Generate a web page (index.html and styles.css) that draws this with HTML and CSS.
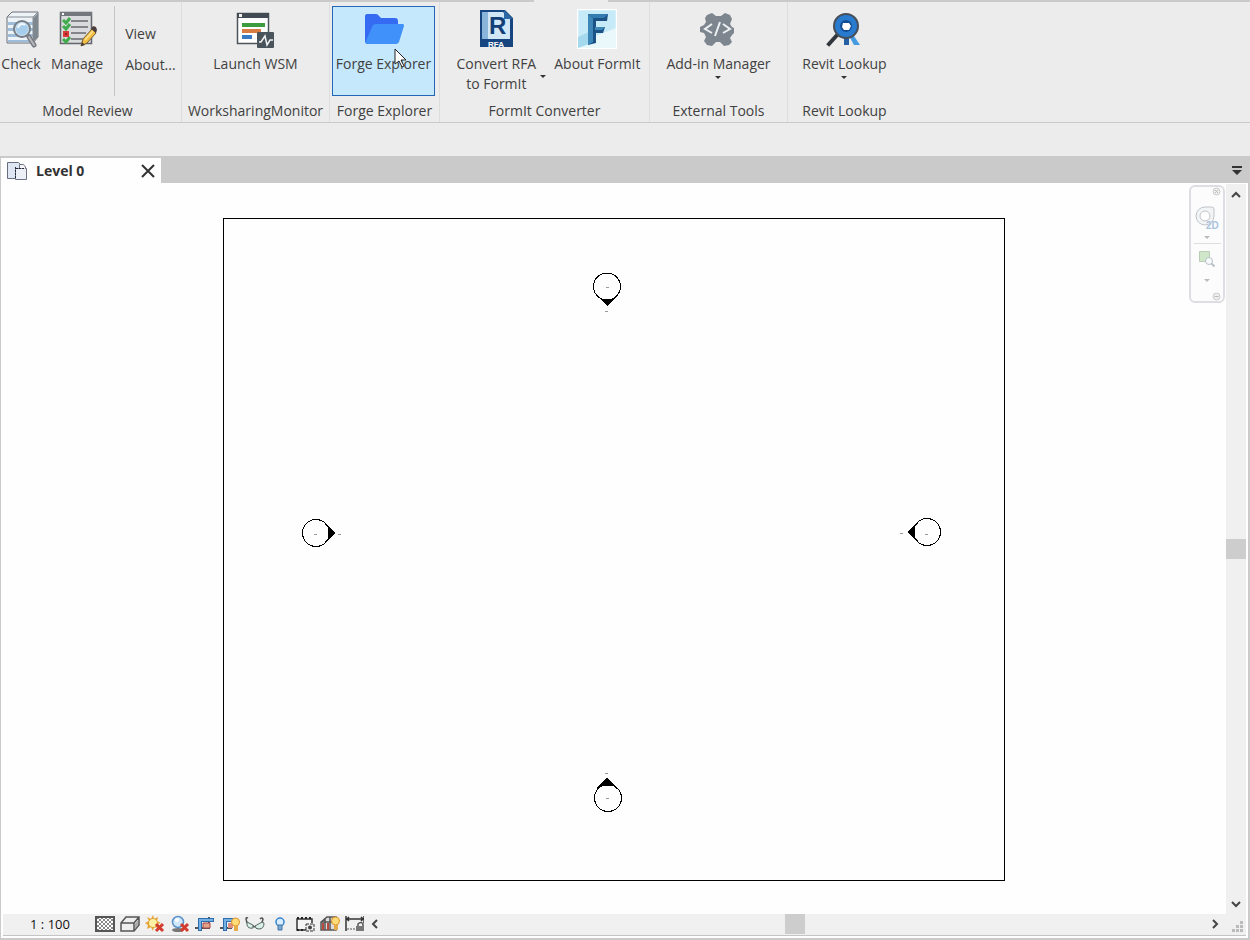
FILE: index.html
```
<!DOCTYPE html>
<html lang="en">
<head>
<meta charset="utf-8">
<title>Level 0</title>
<link rel="stylesheet" href="styles.css">
</head>
<body>
<div class="app">
  <header class="ribbon">
    <div class="ribbon-edge"><span class="ribbon-notch"></span></div>
    <div class="panels">
      <section class="panel panel-review">
        <div class="tools">
          <button class="tool tool-check" type="button">
            <svg class="icon" viewBox="0 0 40 40" aria-hidden="true">
              <path d="M6 8l5-5h26v25l-5 6H6z" fill="#eef3f7" stroke="#6a7179"/>
              <path d="M32 9l5-5v24l-5 5z" fill="#7f878f"/>
              <path d="M7 13h25v3H7zM7 19h25v3H7zM7 25h25v3H7zM7 31h25v2H7z" fill="#9dbddb"/>
              <path d="M6 8h26l5-5M32 8v25" fill="none" stroke="#858c94"/>
              <path d="M28 28l5 8" stroke="#777b81" stroke-width="5" stroke-linecap="round"/>
              <path d="M28 28l5 8" stroke="#b5b8bc" stroke-width="2" stroke-linecap="round"/>
              <circle cx="21" cy="20" r="8" fill="#cce2f4" stroke="#777d84" stroke-width="2"/>
              <circle cx="21" cy="20" r="6" fill="#a6cdec"/>
              <path d="M17 19c1-4 4-5 7-3" fill="none" stroke="#f4faff" stroke-width="2"/>
            </svg>
            <span class="label">Check</span>
          </button>
          <button class="tool tool-manage" type="button">
            <svg class="icon" viewBox="0 0 40 40" aria-hidden="true">
              <path d="M3.500 3.500h31v31h-31z" fill="#d9dbdd" stroke="#62666b" stroke-width="1.500"/>
              <path d="M3 3h32v4H3z" fill="#74787e"/><path d="M5 4h2v2H5z" fill="#fff"/>
              <path d="M14 12h17M14 18h17M14 24h15M14 30h12" stroke="#65696e" stroke-width="1.500"/>
              <path d="M6 11l3 3 4-5M6 17l3 3 4-5M6 30l3 3 4-5" fill="none" stroke="#3fab4b" stroke-width="3"/>
              <path d="M6 22h6v6H6z" fill="#dd3838"/><path d="M8 24l2 2M10 24l-2 2" stroke="#942020"/>
              <path d="M24 37l2-7 9-10 4 4-9 10z" fill="#f4bf43" stroke="#775f35"/>
              <path d="M34 20l2-3 3 1 1 3-1 3z" fill="#4d3e3c"/><path d="M24 37l1-4 3 3z" fill="#443c35"/>
              <path d="M28 31l8-9" stroke="#ffe393" stroke-width="1.500"/>
            </svg>
            <span class="label">Manage</span>
          </button>
          <div class="stack">
            <button class="small" type="button">View</button>
            <button class="small" type="button">About...</button>
          </div>
        </div>
        <h2 class="panel-title">Model Review</h2>
      </section>
      <section class="panel panel-wsm">
        <div class="tools">
          <button class="tool" type="button">
            <svg class="icon" viewBox="0 0 40 40" aria-hidden="true">
              <path d="M2.500 4.500h31v30h-31z" fill="#fff" stroke="#4b535b" stroke-width="1.500"/>
              <path d="M2 4h32v5H2z" fill="#424b54"/><path d="M4 5h3v3H4z" fill="#f4f4f4"/>
              <path d="M7 14h23v4H7z" fill="#3d9b40"/><path d="M7 20h19v4H7z" fill="#d77d43"/><path d="M7 26h10v4H7z" fill="#397ac4"/>
              <rect x="22" y="23" width="17" height="16" rx="1" fill="#4a545d"/>
              <path d="M24 33h2l4-6 2 9 3-5h3" fill="none" stroke="#f2f2f2" stroke-width="1.500"/>
            </svg>
            <span class="label">Launch WSM</span>
          </button>
        </div>
        <h2 class="panel-title">WorksharingMonitor</h2>
      </section>
      <section class="panel panel-forge">
        <div class="tools">
          <button class="tool tool-active" type="button">
            <svg class="icon" viewBox="0 0 40 40" aria-hidden="true">
              <path d="M1 34V7q0-2 2-2h9q2 0 3 2l2 2h14q3 0 3 3v4l-6 19H4q-3 0-3-3z" fill="#356bf3"/>
              <path d="M12 15h27q1 0 1 2l-5 16q-1 2-3 2H4q-3 0-2-3l6-14q1-3 4-3z" fill="#4191fa"/>
            </svg>
            <span class="label">Forge Explorer</span>
            <svg class="cursor" viewBox="0 0 13 20" aria-hidden="true"><path d="M1 1v15l4-3 3 6 2-1-3-6h5z" fill="#fff" stroke="#222"/></svg>
          </button>
        </div>
        <h2 class="panel-title">Forge Explorer</h2>
      </section>
      <section class="panel panel-formit">
        <div class="tools">
          <button class="tool tool-convert" type="button">
            <svg class="icon" viewBox="0 0 40 40" aria-hidden="true">
              <path d="M4 1h25l8 8v29H4z" fill="#17457f"/><path d="M6 3h21l7 7v20H6z" fill="#d2e7f5"/>
              <path d="M6 3h6v27H6z" fill="#88b5d9"/><path d="M28 1l9 9h-9z" fill="#2c68a4"/>
              <text class="glyph" x="13" y="25" font-size="24" fill="#123f78">R</text>
              <text class="glyph" x="20" y="38" font-size="8" text-anchor="middle" fill="#fff">RFA</text>
            </svg>
            <span class="label">Convert RFA<br>to FormIt</span>
            <span class="arrow arrow-side"></span>
          </button>
          <button class="tool" type="button">
            <svg class="icon" viewBox="0 0 40 40" aria-hidden="true">
              <path d="M.5.500h39v39H.500z" fill="#c7eaf8" stroke="#fff" stroke-width="1.500"/>
              <path d="M1 34l38-15v20H1z" fill="#eaf8fc"/><path d="M1 28l11-5v12L1 39z" fill="#a4d8ed"/>
              <path d="M11 5h20l-1 7H19v6h9l-2 6h-7v10l-8 2z" fill="#1d5286"/>
              <path d="M11 5l5 4v24l-5 3z" fill="#3c86b8"/><path d="M11 5h20l-4 4H16z" fill="#337bb0"/>
              <path d="M18 18h10l-3 3h-7z" fill="#3e89b9"/>
            </svg>
            <span class="label">About FormIt</span>
          </button>
        </div>
        <h2 class="panel-title">FormIt Converter</h2>
      </section>
      <section class="panel panel-external">
        <div class="tools">
          <button class="tool" type="button">
            <svg class="icon" viewBox="0 0 40 40" aria-hidden="true">
              <path d="M9 6l5-2 4 3h5l4-3 5 2 2 4-2 5 2 3 2 1v5l-2 2-2 3 2 4-3 3-5 1-4-4h-4l-4 4-5-1-3-4 2-4-2-4-4-1v-5l4-2 2-3-1-4z" fill="#7d858e"/>
              <path d="M14 15l-7 5 7 4M25 15l7 5-7 4M22 13l-5 14" fill="none" stroke="#edf1f4" stroke-width="2"/>
            </svg>
            <span class="label">Add-in Manager</span><span class="arrow"></span>
          </button>
        </div>
        <h2 class="panel-title">External Tools</h2>
      </section>
      <section class="panel panel-lookup">
        <div class="tools">
          <button class="tool" type="button">
            <svg class="icon" viewBox="0 0 40 40" aria-hidden="true">
              <path d="M20 27h5v9h-5z" fill="#2460a3"/><path d="M25 27h5l6 9h-6z" fill="#459ae0"/>
              <path d="M14 25L5 35" stroke="#31373d" stroke-width="4" stroke-linecap="square"/>
              <circle cx="22" cy="17" r="12" fill="#297bcf" stroke="#464e57" stroke-width="2"/>
              <circle cx="22" cy="17" r="6" fill="#124f96"/><path d="M19 14h6l2 3-2 4h-5l-2-3z" fill="#fff"/>
            </svg>
            <span class="label">Revit Lookup</span><span class="arrow"></span>
          </button>
        </div>
        <h2 class="panel-title">Revit Lookup</h2>
      </section>
    </div>
  </header>

  <main class="view">
    <div class="tabs">
      <div class="tab">
        <svg class="tab-icon" viewBox="0 0 20 18" aria-hidden="true">
          <path d="M.5.500h11l2 2v14H.500z" fill="#dfe6f3" stroke="#666d7c"/>
          <path d="M8.500 6.500h11v11h-11z" fill="#eef0f8" stroke="#6e7484"/>
          <path d="M12.500 6V2.500h4L18.500 5v2" fill="#f6f7fb" stroke="#6e7484"/>
          <path d="M8.500 5v12M9 6.500h9" stroke="#252a34" stroke-dasharray="2 1"/>
        </svg>
        <span class="tab-name">Level 0</span>
        <button class="plain close" type="button" aria-label="Close view"><svg viewBox="0 0 14 14" width="14" height="14"><path d="M1 1l12 12M13 1L1 13" stroke="#333" stroke-width="2"/></svg></button>
      </div>
      <button class="plain tab-menu" type="button" aria-label="List views"><svg viewBox="0 0 10 9" width="10" height="9"><path d="M0 0h10v2H0zM0 4h10L5 9z" fill="#333"/></svg></button>
    </div>

    <div class="workspace">
      <div class="canvas">
        <svg class="drawing" viewBox="0 0 782 663" shape-rendering="crispEdges" role="img" aria-label="Floor plan with four elevation markers">
          <path d="M.5.500h781v662H.500z" fill="none" stroke="#000"/>
          <g fill="#fefefe" stroke="#000">
            <circle cx="384" cy="68.500" r="13.500"/>
            <circle cx="93" cy="315" r="13.500"/>
            <circle cx="704" cy="314" r="13.500"/>
            <circle cx="385" cy="580" r="13.500"/>
          </g>
          <path d="M374 78l3 3h13l3-3 1 1-10 9z"/>
          <path d="M102 305l10 10-10 10-1-1 4-4v-11l-4-3z"/>
          <path d="M695 304l-11 10 10 10 1-1-3-4v-11l3-3z"/>
          <path d="M384 560l11 10-1 1-4-3h-13l-3 3-1-1z"/>
          <path d="M383 69.500h3M382 93.500h3M91 316.500h3M115 316.500h3M702 316.500h3M677 315.500h3M382 555.500h3M383 580.500h3" stroke="#999"/>
        </svg>
        <nav class="navbar" aria-label="Navigation bar">
          <button class="plain nav-corner" type="button" aria-label="Close navigation bar"><svg viewBox="0 0 9 9" width="9" height="9"><circle cx="4.500" cy="4.500" r="3.500" fill="#eee" stroke="#ccc"/><path d="M3 3l3 3M6 3L3 6" stroke="#bbb"/></svg></button>
          <button class="plain nav-wheel" type="button" aria-label="Steering wheel 2D"><svg viewBox="0 0 26 26" width="26" height="26"><path d="M11 2h7q2 0 2 2v7a9 9 0 1 1-9-9z" fill="#f3f4f5" stroke="#bfc3c8"/><circle cx="11" cy="11" r="5" fill="#fff" stroke="#bfc3c8"/><text class="nav-text" x="12" y="24">2D</text></svg></button>
          <span class="arrow arrow-faint"></span>
          <button class="plain nav-zoom" type="button" aria-label="Zoom region"><svg viewBox="0 0 18 18" width="18" height="18"><path d="M1.500 1.500h10v10h-10z" fill="#d0e6c9" stroke="#b9cdb6"/><circle cx="11" cy="11" r="3.500" fill="#f7fafb" stroke="#b9c0c8"/><path d="M13.500 13.500l3 3" stroke="#b9c0c8" stroke-width="2"/></svg></button>
          <span class="arrow arrow-faint"></span>
          <button class="plain nav-corner nav-last" type="button" aria-label="Navigation options"><svg viewBox="0 0 9 9" width="9" height="9"><circle cx="4.500" cy="4.500" r="3.500" fill="#eee" stroke="#ccc"/><path d="M2.500 4.500h4" stroke="#bbb"/></svg></button>
        </nav>
      </div>
      <div class="scroll scroll-y">
        <button class="plain step" type="button" aria-label="Scroll up"><svg viewBox="0 0 10 7" width="10" height="7"><path d="M1 6l4-4 4 4" fill="none" stroke="#444" stroke-width="2"/></svg></button>
        <div class="track"><span class="thumb"></span></div>
        <button class="plain step" type="button" aria-label="Scroll down"><svg viewBox="0 0 10 7" width="10" height="7"><path d="M1 1l4 4 4-4" fill="none" stroke="#444" stroke-width="2"/></svg></button>
      </div>
    </div>

    <footer class="status">
      <button class="plain scale" type="button">1 : 100</button>
      <div class="view-tools">
        <button class="plain" type="button" aria-label="Detail level"><svg viewBox="0 0 20 18" width="20" height="18"><defs><pattern id="check" width="4" height="4" patternUnits="userSpaceOnUse"><path d="M0 0h2v2H0zM2 2h2v2H2z" fill="#888"/></pattern></defs><path d="M1 2h18v14H1z" fill="#fff"/><path d="M1 2h18v14H1z" fill="url(#check)" stroke="#555" stroke-width="2"/></svg></button>
        <button class="plain" type="button" aria-label="Visual style"><svg viewBox="0 0 20 18" width="20" height="18"><path d="M1 8l5-6h13v8l-5 6H1zM1 8h13v8M14 8l5-6" fill="#eee" stroke="#555" stroke-width="1.500"/><path d="M15 9l3-4v5l-3 4z" fill="#aaa"/></svg></button>
        <button class="plain" type="button" aria-label="Sun path off"><svg viewBox="0 0 20 18" width="20" height="18"><path d="M8 0l1 4 4-2-1 4 4 2-4 1 1 4-4-1-1 4-2-4-4 2 1-4-3-2 4-2-2-4 4 2z" fill="#e9a12e"/><circle cx="8" cy="8" r="4.500" fill="#fff1a3" stroke="#dda438"/><path d="M11 9l7 7M18 9l-7 7" stroke="#d33b2e" stroke-width="3"/></svg></button>
        <button class="plain" type="button" aria-label="Shadows off"><svg viewBox="0 0 20 18" width="20" height="18"><ellipse cx="8" cy="15" rx="6" ry="2" fill="#777"/><circle cx="8" cy="7" r="5.500" fill="#d1e8fa" stroke="#5a91c9" stroke-width="1.500"/><circle cx="7" cy="5" r="2" fill="#fff"/><path d="M11 9l7 7M18 9l-7 7" stroke="#d33b2e" stroke-width="3"/></svg></button>
        <button class="plain" type="button" aria-label="Crop view"><svg viewBox="0 0 20 18" width="20" height="18"><path d="M14 2v11H0" fill="none" stroke="#555" stroke-width="2"/><path d="M8 8h7v5H8z" fill="#e3a28c" stroke="#a44"/><path d="M5 16V5h14" fill="none" stroke="#2b6daf" stroke-width="4"/><path d="M5 15V5h13" fill="none" stroke="#76b1e4" stroke-width="2"/></svg></button>
        <button class="plain" type="button" aria-label="Show crop region"><svg viewBox="0 0 20 18" width="20" height="18"><path d="M0 13h12" stroke="#555" stroke-width="2"/><path d="M8 8h5v5H8z" fill="#dd8d7d"/><path d="M5 16V5h10" fill="none" stroke="#2b6daf" stroke-width="4"/><path d="M5 15V5h9" fill="none" stroke="#76b1e4" stroke-width="2"/><circle cx="15.500" cy="7" r="4" fill="#ffdc79" stroke="#df9329"/><path d="M14 11h4v5h-4z" fill="#e5ab48"/></svg></button>
        <button class="plain" type="button" aria-label="Temporary hide or isolate"><svg viewBox="0 0 20 18" width="20" height="18"><path d="M2 8L1 4q0-2 2-1M10 12l-2-1M17 8l1-4q-1-2-3 0" fill="none" stroke="#555" stroke-width="1.500"/><path d="M2 7l6 3v3q-5 1-6-3zM10 11l7-4 2 1q0 6-5 6-4 0-4-3z" fill="#d8eee6" stroke="#53665f"/></svg></button>
        <button class="plain" type="button" aria-label="Reveal hidden elements"><svg viewBox="0 0 20 18" width="20" height="18"><circle cx="10" cy="7" r="4" fill="#d9efff" stroke="#3184ce" stroke-width="1.500"/><path d="M8 10h4v5H8z" fill="#79a9d3" stroke="#4377a6"/></svg></button>
        <button class="plain" type="button" aria-label="Temporary view properties"><svg viewBox="0 0 20 18" width="20" height="18"><path d="M11 15H2V4h15v4" fill="#f5f5f5" stroke="#333" stroke-width="1.500"/><path d="M2 3h15M2 15h8" stroke="#222" stroke-width="2" stroke-dasharray="2 2"/><path d="M11 9h8v7h-8z" fill="#eee" stroke="#333" stroke-dasharray="3 1"/><circle cx="15" cy="12.500" r="2" fill="#444"/></svg></button>
        <button class="plain" type="button" aria-label="Analytical model"><svg viewBox="0 0 20 18" width="20" height="18"><path d="M1 7l6-5h9v13H1zM1 7h12M5 3v12M10 2v13" fill="#ddd" stroke="#555" stroke-width="1.500"/><path d="M2 8h2v7H2zM7 8h2v7H7z" fill="#b9483f"/><circle cx="15.500" cy="6" r="4" fill="#ffdc79" stroke="#df9329"/><path d="M14 10h4v5h-4z" fill="#e5ab48"/></svg></button>
        <button class="plain" type="button" aria-label="Reveal constraints"><svg viewBox="0 0 20 18" width="20" height="18"><path d="M1 1v15M19 1v7M2 4h16M4 2L2 4l2 2M16 2l2 2-2 2" fill="none" stroke="#333" stroke-width="1.500"/><path d="M2 14h9" stroke="#555" stroke-dasharray="2 1"/><path d="M13 11V9q3-3 5 0v2" fill="none" stroke="#555" stroke-width="1.500"/><path d="M11 11h8v5h-8z" fill="#777"/></svg></button>
      </div>
      <div class="scroll scroll-x">
        <button class="plain step" type="button" aria-label="Scroll left"><svg viewBox="0 0 7 10" width="7" height="10"><path d="M6 1L2 5l4 4" fill="none" stroke="#444" stroke-width="2"/></svg></button>
        <div class="track"><span class="thumb"></span></div>
        <button class="plain step" type="button" aria-label="Scroll right"><svg viewBox="0 0 7 10" width="7" height="10"><path d="M1 1l4 4-4 4" fill="none" stroke="#444" stroke-width="2"/></svg></button>
      </div>
      <svg class="grip" viewBox="0 0 12 12" aria-hidden="true"><path d="M8 0h3v3H8zM4 4h3v3H4zM8 4h3v3H8zM0 8h3v3H0zM4 8h3v3H4zM8 8h3v3H8z" fill="#bbb"/></svg>
    </footer>
  </main>
</div>
</body>
</html>
```
FILE: styles.css
```
* { box-sizing: border-box; }
body {
  margin: 0;
  background: #ececec;
  color: #414141;
  font: 14px/20px "Open Sans", "Noto Sans", sans-serif;
}
svg { display: block; }
button { font: inherit; color: inherit; cursor: default; }
.app { display: flex; flex-direction: column; min-height: 100vh; }

.ribbon { padding-bottom: 33px; }
.ribbon-edge { height: 2px; background: #cacaca; display: grid; grid-template-columns: 534fr 74fr 642fr; }
.ribbon-notch { grid-column: 2; background: #ececec; }
.panels { display: flex; height: 121px; border-bottom: 1px solid #c9cacc; }
.panel { display: flex; flex-direction: column; flex: none; border-right: 1px solid #dcdddd; padding-top: 4px; }
.panel-review { width: 182px; }
.panel-wsm { width: 148px; }
.panel-forge { width: 110px; }
.panel-formit { width: 210px; }
.panel-external { width: 138px; }
.panel-lookup { width: 113px; border-right: 0; }
.panel-title { margin: 0; padding: 5px 0 0; font-size: 14px; font-weight: 400; text-align: center; white-space: nowrap; }
.panel-review .panel-title { padding-right: 6px; }
.tools { display: flex; justify-content: center; height: 90px; }
.tool {
  position: relative;
  display: flex;
  flex-direction: column;
  align-items: center;
  gap: 5px;
  padding: 2px 2px 0;
  border: 1px solid transparent;
  background: none;
  white-space: nowrap;
}
.icon { width: 40px; height: 40px; }
.glyph { font-family: "Liberation Sans", sans-serif; font-weight: 700; }
.panel-forge .tools { padding: 0 4px 0 2px; }
.tool-active { flex: 1; border-color: #2366b5; background: #c6e8fc; }
.cursor { position: absolute; left: 61px; top: 41px; width: 13px; height: 20px; }
.arrow { width: 0; border: 3px solid transparent; border-top-color: #333; border-bottom: 0; }
.tool > .arrow { margin-top: -3px; }
.tool > .arrow-side { position: absolute; right: -8px; top: 71px; }
.panel-formit .tools { gap: 12px; padding-left: 8px; }
.panel-review .tools { justify-content: flex-start; }
.tool-check { padding-left: 0; padding-right: 6px; }
.stack {
  display: flex;
  flex-direction: column;
  align-items: flex-start;
  gap: 11px;
  margin-left: 8px;
  padding: 18px 0 0 10px;
  border-left: 1px solid #c5c6c8;
}
.small { padding: 0; border: 0; background: none; }

.plain { display: flex; align-items: center; justify-content: center; padding: 0; border: 0; background: none; }
.view {
  flex: 1;
  display: flex;
  flex-direction: column;
  border: solid #cacaca;
  border-width: 0 2px 2px 1px;
  background: #fefefe;
}
.tabs { display: flex; justify-content: space-between; height: 27px; padding-top: 2px; background: #cacaca; }
.tab { display: flex; align-items: center; width: 160px; padding: 0 6px; background: #fefefe; }
.tab-icon { width: 20px; height: 18px; }
.tab-name { flex: 1; padding-left: 9px; font-weight: 700; color: #333; }
.tab-menu { width: 22px; }
.workspace { flex: 1; display: flex; }
.canvas { position: relative; flex: 1; display: grid; place-items: center; padding-top: 2px; }
.drawing { width: 782px; height: 663px; }
.navbar {
  position: absolute;
  top: 2px;
  right: 1px;
  width: 36px;
  height: 118px;
  display: flex;
  flex-direction: column;
  align-items: center;
  border: 2px solid #dddee4;
  border-radius: 6px;
  background: #fcfcfd;
}
.nav-corner { align-self: flex-end; padding: 0 2px; }
.nav-wheel { margin-top: 9px; }
.nav-text { font: 700 10px "Liberation Sans", sans-serif; fill: #a9c3dd; }
.arrow-faint { border-top-color: #bbb; margin-top: 5px; }
.nav-zoom { width: 27px; height: 33px; margin-top: 4px; border-top: 1px solid #dedede; }
.nav-last { margin-top: 10px; }

.scroll { display: flex; background: #f0f0f0; }
.scroll-y { flex-direction: column; width: 20px; margin: 1px 2px 0 0; }
.scroll-x { flex: 1; }
.step { width: 20px; height: 20px; }
.track { flex: 1; display: flex; align-items: center; justify-content: center; }
.thumb { width: 20px; height: 20px; background: #cdcdcd; }
.status {
  display: flex;
  align-items: center;
  height: 22px;
  margin: 0 2px 2px;
  padding: 0 2px 1px 0;
  border-bottom: 1px solid #c4c4c4;
  background: #f0f0f0;
}
.scale { width: 94px; color: #111; font-size: 13px; }
.view-tools { display: flex; gap: 5px; width: 269px; margin-left: -2px; }
.grip { width: 12px; height: 12px; margin: 6px 0 0 7px; }
```
